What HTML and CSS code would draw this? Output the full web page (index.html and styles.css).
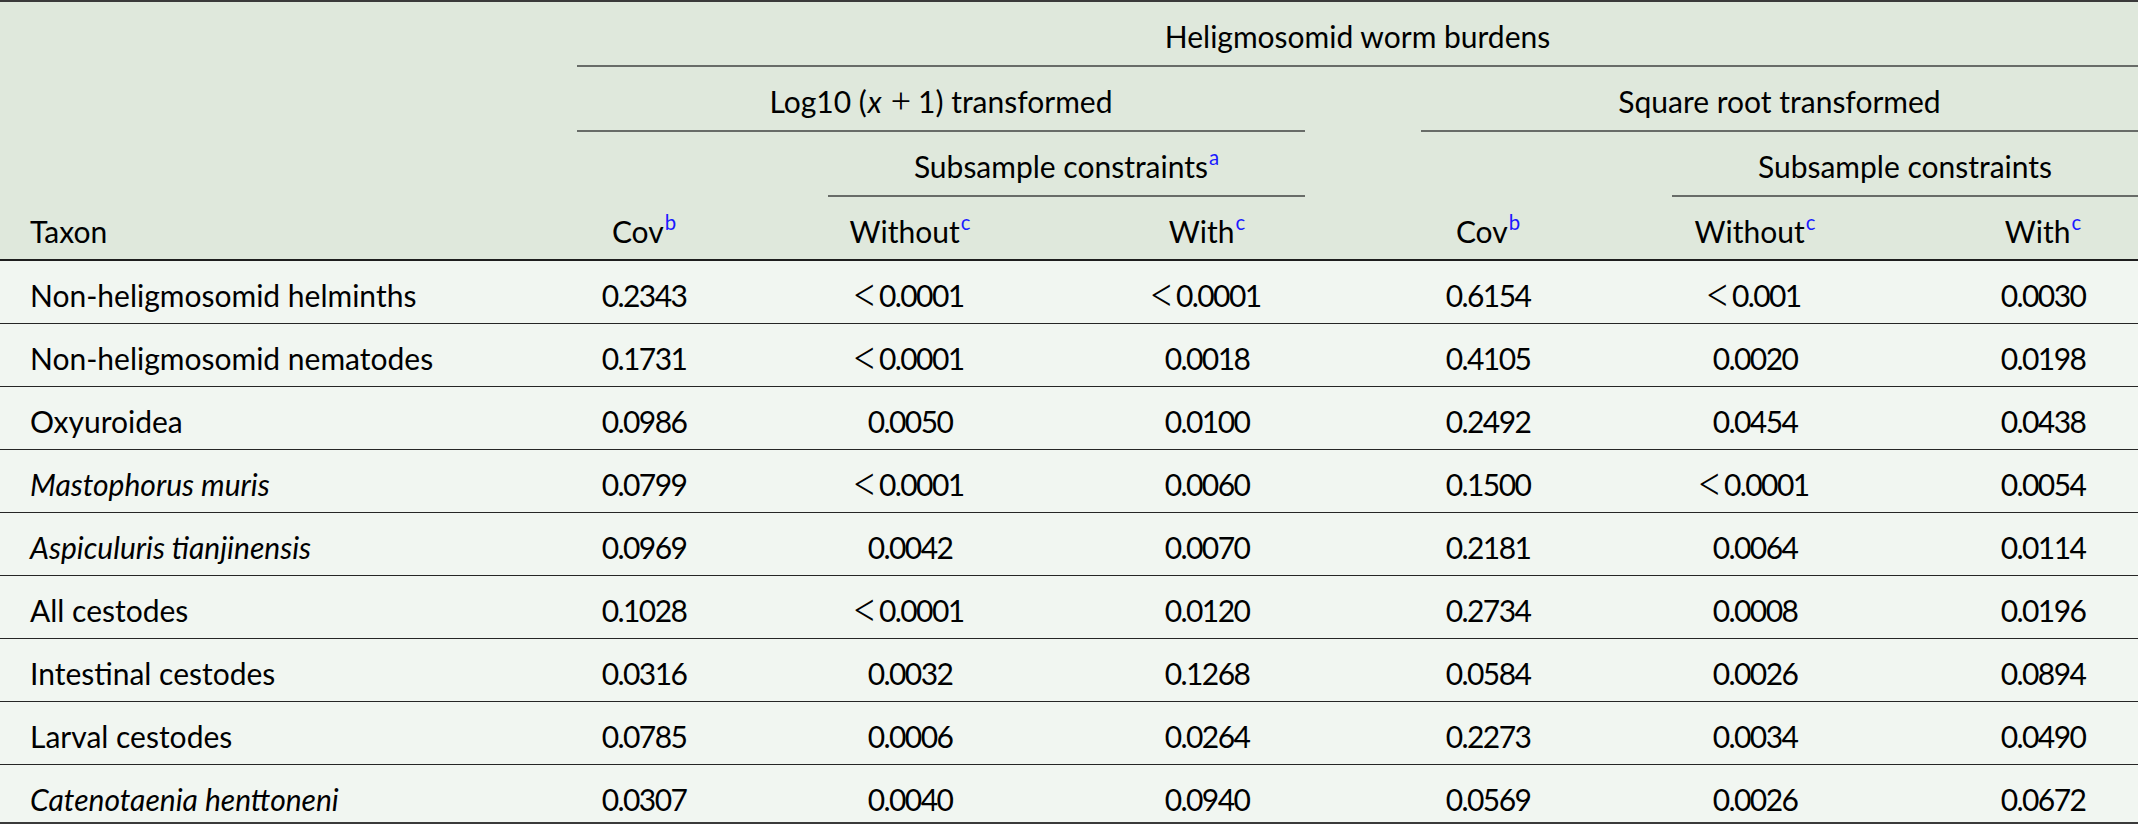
FILE: index.html
```html
<!DOCTYPE html>
<html lang="en">
<head>
<meta charset="utf-8">
<title>Heligmosomid worm burdens</title>
<link rel="stylesheet" href="styles.css">
</head>
<body>
<div class="table">
  <div class="row head ha">
    <div class="cell top-all line">Heligmosomid worm burdens</div>
  </div>
  <div class="row head hb">
    <div class="cell grp1 line">Log10 (<i class="mi">x</i><span class="op">+</span>1) transformed</div>
    <div class="cell grp2 line">Square root transformed</div>
  </div>
  <div class="row head hc">
    <div class="cell sub1 line">Subsample constraints<sup>a</sup></div>
    <div class="cell sub2 line">Subsample constraints</div>
  </div>
  <div class="row head hd">
    <div class="cell taxon">Taxon</div>
    <div class="cell c1">Cov<sup>b</sup></div>
    <div class="cell c2">Without<sup>c</sup></div>
    <div class="cell c3">With<sup>c</sup></div>
    <div class="cell c4">Cov<sup>b</sup></div>
    <div class="cell c5">Without<sup>c</sup></div>
    <div class="cell c6">With<sup>c</sup></div>
  </div>

  <div class="row body">
    <div class="cell taxon">Non-heligmosomid helminths</div>
    <div class="cell num c1">0.2343</div>
    <div class="cell num c2"><span class="lt">&lt;</span>0.0001</div>
    <div class="cell num c3"><span class="lt">&lt;</span>0.0001</div>
    <div class="cell num c4">0.6154</div>
    <div class="cell num c5"><span class="lt">&lt;</span>0.001</div>
    <div class="cell num c6">0.0030</div>
  </div>
  <div class="row body">
    <div class="cell taxon">Non-heligmosomid nematodes</div>
    <div class="cell num c1">0.1731</div>
    <div class="cell num c2"><span class="lt">&lt;</span>0.0001</div>
    <div class="cell num c3">0.0018</div>
    <div class="cell num c4">0.4105</div>
    <div class="cell num c5">0.0020</div>
    <div class="cell num c6">0.0198</div>
  </div>
  <div class="row body">
    <div class="cell taxon">Oxyuroidea</div>
    <div class="cell num c1">0.0986</div>
    <div class="cell num c2">0.0050</div>
    <div class="cell num c3">0.0100</div>
    <div class="cell num c4">0.2492</div>
    <div class="cell num c5">0.0454</div>
    <div class="cell num c6">0.0438</div>
  </div>
  <div class="row body">
    <div class="cell taxon"><i>Mastophorus muris</i></div>
    <div class="cell num c1">0.0799</div>
    <div class="cell num c2"><span class="lt">&lt;</span>0.0001</div>
    <div class="cell num c3">0.0060</div>
    <div class="cell num c4">0.1500</div>
    <div class="cell num c5"><span class="lt">&lt;</span>0.0001</div>
    <div class="cell num c6">0.0054</div>
  </div>
  <div class="row body">
    <div class="cell taxon"><i>Aspiculuris tianjinensis</i></div>
    <div class="cell num c1">0.0969</div>
    <div class="cell num c2">0.0042</div>
    <div class="cell num c3">0.0070</div>
    <div class="cell num c4">0.2181</div>
    <div class="cell num c5">0.0064</div>
    <div class="cell num c6">0.0114</div>
  </div>
  <div class="row body">
    <div class="cell taxon">All cestodes</div>
    <div class="cell num c1">0.1028</div>
    <div class="cell num c2"><span class="lt">&lt;</span>0.0001</div>
    <div class="cell num c3">0.0120</div>
    <div class="cell num c4">0.2734</div>
    <div class="cell num c5">0.0008</div>
    <div class="cell num c6">0.0196</div>
  </div>
  <div class="row body">
    <div class="cell taxon">Intestinal cestodes</div>
    <div class="cell num c1">0.0316</div>
    <div class="cell num c2">0.0032</div>
    <div class="cell num c3">0.1268</div>
    <div class="cell num c4">0.0584</div>
    <div class="cell num c5">0.0026</div>
    <div class="cell num c6">0.0894</div>
  </div>
  <div class="row body">
    <div class="cell taxon">Larval cestodes</div>
    <div class="cell num c1">0.0785</div>
    <div class="cell num c2">0.0006</div>
    <div class="cell num c3">0.0264</div>
    <div class="cell num c4">0.2273</div>
    <div class="cell num c5">0.0034</div>
    <div class="cell num c6">0.0490</div>
  </div>
  <div class="row body last">
    <div class="cell taxon"><i>Catenotaenia henttoneni</i></div>
    <div class="cell num c1">0.0307</div>
    <div class="cell num c2">0.0040</div>
    <div class="cell num c3">0.0940</div>
    <div class="cell num c4">0.0569</div>
    <div class="cell num c5">0.0026</div>
    <div class="cell num c6">0.0672</div>
  </div>
</div>
</body>
</html>
```

FILE: styles.css
```css
html, body {
  margin: 0;
  padding: 0;
  background: #f1f6f1;
}

body {
  font-family: "Lato", "Noto Sans", sans-serif;
  font-size: 30px;
  color: #000;
}

.table {
  width: 2138px;
  border-top: 2px solid #3a3a3a;
  background: #f1f6f1;
}

.row {
  display: grid;
  grid-template-columns: 577px 134px 117px 164px 117px 196px 116px 134px 117px 166px 110px 190px;
  box-sizing: border-box;
  line-height: 36px;
}

.head {
  background: #dfe8dc;
  height: 65px;
}

.head.hd {
  height: 64px;
  border-bottom: 2px solid #1e1e1e;
}

.cell {
  box-sizing: border-box;
  padding-top: 16px;
  text-align: center;
  white-space: nowrap;
}

.num {
  letter-spacing: -1.6px;
}

.line {
  border-bottom: 2px solid #686c68;
}

.top-all { grid-column: 2 / 13; }
.grp1 { grid-column: 2 / 7; }
.grp2 { grid-column: 8 / 13; }
.sub1 { grid-column: 4 / 7; }
.sub2 { grid-column: 10 / 13; }

.taxon {
  grid-column: 1;
  text-align: left;
  padding-left: 30px;
}
.c1 { grid-column: 2; }
.c2 { grid-column: 4; }
.c3 { grid-column: 6; }
.c4 { grid-column: 8; }
.c5 { grid-column: 10; }
.c6 { grid-column: 12; }

.body {
  height: 63px;
  border-bottom: 1px solid #262626;
}

.body.last {
  height: 59px;
  border-bottom: 2px solid #3a3a3a;
}

sup {
  color: #1a1aff;
  font-size: 0.68em;
  line-height: 0;
  vertical-align: 0.62em;
  margin-left: 1px;
}

.mi {
  margin-left: 1px;
}

.op {
  margin: 0 7px 0 9px;
  font-family: "Liberation Serif", serif;
  font-size: 1.2em;
  line-height: 0;
}

.lt {
  display: inline-block;
  font-family: "Liberation Serif", serif;
  font-size: 1.45em;
  line-height: 0;
  letter-spacing: 0;
  vertical-align: -3px;
  transform: scaleX(0.85);
  margin: 0 2px 0 -4px;
}
```
